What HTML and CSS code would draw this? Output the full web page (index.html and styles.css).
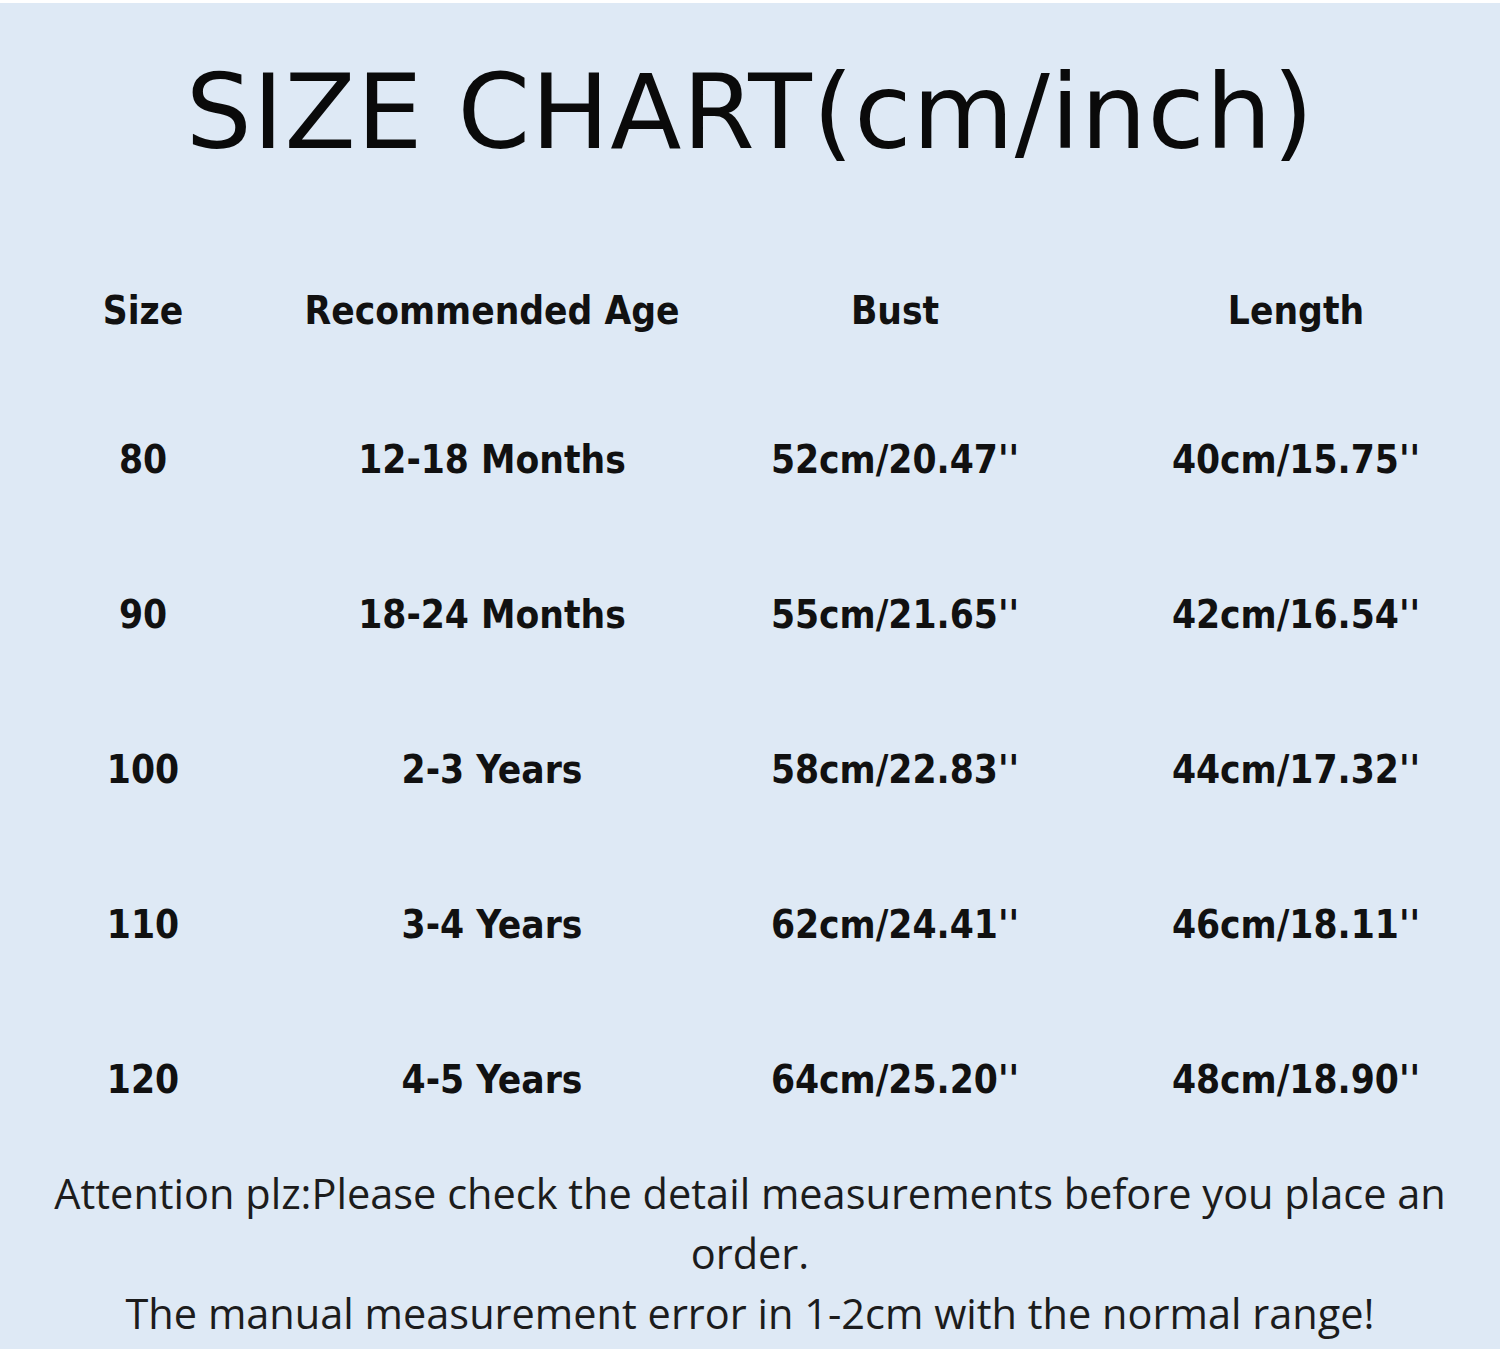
FILE: index.html
```html
<!DOCTYPE html>
<html lang="en">
<head>
<meta charset="utf-8">
<title>Size Chart</title>
<link rel="stylesheet" href="styles.css">
</head>
<body>
<main class="chart">
  <h1 class="title">SIZE CHART(cm/inch)</h1>
  <div class="table">
    <div class="row head">
      <span>Size</span><span>Recommended Age</span><span>Bust</span><span>Length</span>
    </div>
    <div class="row">
      <span>80</span><span>12-18 Months</span><span>52cm/20.47''</span><span>40cm/15.75''</span>
    </div>
    <div class="row">
      <span>90</span><span>18-24 Months</span><span>55cm/21.65''</span><span>42cm/16.54''</span>
    </div>
    <div class="row">
      <span>100</span><span>2-3 Years</span><span>58cm/22.83''</span><span>44cm/17.32''</span>
    </div>
    <div class="row">
      <span>110</span><span>3-4 Years</span><span>62cm/24.41''</span><span>46cm/18.11''</span>
    </div>
    <div class="row">
      <span>120</span><span>4-5 Years</span><span>64cm/25.20''</span><span>48cm/18.90''</span>
    </div>
  </div>
  <p class="note">Attention plz:Please check the detail measurements before you place an order.<br>The manual measurement error in 1-2cm with the normal range!</p>
</main>
</body>
</html>
```

FILE: styles.css
```css
html, body {
  margin: 0;
  padding: 0;
  background: #ffffff;
}

.chart {
  box-sizing: border-box;
  width: 1500px;
  height: 1353px;
  margin: 0;
  border-top: 3px solid #ffffff;
  border-bottom: 4px solid #ffffff;
  background: #dee9f5;
  color: #0c0c0c;
  display: flex;
  flex-direction: column;
}

.title {
  margin: 0;
  height: 235px;
  display: flex;
  align-items: center;
  justify-content: center;
  padding-bottom: 18px;
  box-sizing: border-box;
  font-family: "DejaVu Sans", sans-serif;
  font-weight: normal;
  font-size: 104px;
  letter-spacing: 1px;
  color: #0a0a0a;
}

.table {
  display: flex;
  flex-direction: column;
}

.row {
  display: grid;
  grid-template-columns: 286px 412px 394px 408px;
  height: 155px;
  align-items: center;
  font-family: "DejaVu Sans Condensed", "DejaVu Sans", sans-serif;
  font-weight: bold;
  font-size: 38.5px;
  color: #111;
}

.row.head {
  height: 144px;
}

.row span {
  text-align: center;
}

.note {
  margin: 6px 0 0;
  padding: 0 30px;
  text-align: center;
  font-family: "Open Sans", sans-serif;
  font-size: 41.5px;
  line-height: 60px;
  color: #1c1c1c;
}
```
